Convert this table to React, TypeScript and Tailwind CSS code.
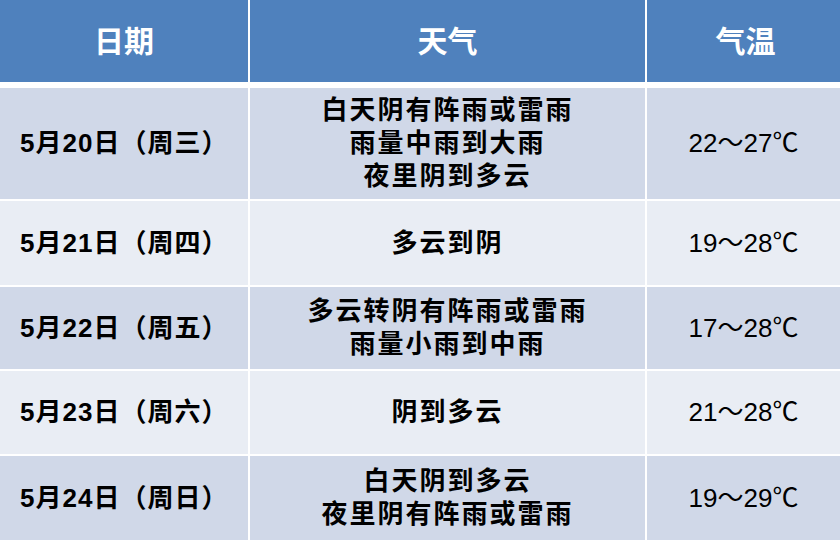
const rows = [
  { date: "5月20日（周三）", weather: ["白天阴有阵雨或雷雨", "雨量中雨到大雨", "夜里阴到多云"], temp: "22～27℃", h: "h-[111px]", bg: "bg-[#d0d8e8]" },
  { date: "5月21日（周四）", weather: ["多云到阴"], temp: "19～28℃", h: "h-[84px]", bg: "bg-[#e9edf4]" },
  { date: "5月22日（周五）", weather: ["多云转阴有阵雨或雷雨", "雨量小雨到中雨"], temp: "17～28℃", h: "h-[82px]", bg: "bg-[#d0d8e8]" },
  { date: "5月23日（周六）", weather: ["阴到多云"], temp: "21～28℃", h: "h-[83px]", bg: "bg-[#e9edf4]" },
  { date: "5月24日（周日）", weather: ["白天阴到多云", "夜里阴有阵雨或雷雨"], temp: "19～29℃", h: "h-[84px]", bg: "bg-[#d0d8e8]" },
];

const font = "font-['Liberation_Sans','Noto_Sans_CJK_SC',sans-serif]";

export default function App() {
  return (
    <div className={`w-[840px] h-[540px] bg-white flex flex-col overflow-hidden ${font}`}>
      <div className="grid grid-cols-[248px_395px_197px] gap-x-[2px] h-[82px] text-white font-bold text-[30px]">
        <div className="bg-[#4f81bd] flex items-center justify-center">日期</div>
        <div className="bg-[#4f81bd] flex items-center justify-center">天气</div>
        <div className="bg-[#4f81bd] flex items-center justify-center">气温</div>
      </div>
      <div className="flex flex-col gap-y-[2px] mt-[6px] text-black font-bold text-[26px]">
        {rows.map((r) => (
          <div key={r.date} className={`grid grid-cols-[248px_395px_197px] gap-x-[2px] ${r.h}`}>
            <div className={`${r.bg} flex items-center pl-[20px] tracking-[1px]`}>{r.date}</div>
            <div className={`${r.bg} flex flex-col items-center justify-center leading-[33px] tracking-[2px]`}>
              {r.weather.map((w) => (
                <div key={w}>{w}</div>
              ))}
            </div>
            <div className={`${r.bg} flex items-center justify-center pr-[4px] font-normal`}>{r.temp}</div>
          </div>
        ))}
      </div>
    </div>
  );
}
